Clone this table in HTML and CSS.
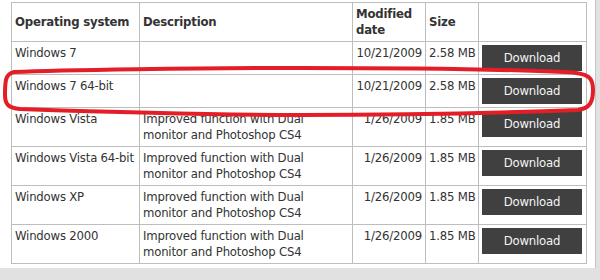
FILE: index.html
```html
<!DOCTYPE html>
<html lang="en">
<head>
  <meta charset="UTF-8">
  <title>Driver downloads</title>
  <link rel="stylesheet" href="styles.css">
</head>
<body>
  <div class="page">
    <table class="downloads">
      <colgroup>
        <col class="col-os">
        <col class="col-desc">
        <col class="col-date">
        <col class="col-size">
        <col class="col-action">
      </colgroup>
      <thead>
        <tr>
          <th>Operating system</th>
          <th>Description</th>
          <th>Modified date</th>
          <th>Size</th>
          <th></th>
        </tr>
      </thead>
      <tbody>
        <tr>
          <td class="os">Windows 7</td>
          <td></td>
          <td class="date">10/21/2009</td>
          <td class="size">2.58 MB</td>
          <td class="action"><a class="download-btn" href="#">Download</a></td>
        </tr>
        <tr>
          <td class="os">Windows 7 64-bit</td>
          <td></td>
          <td class="date">10/21/2009</td>
          <td class="size">2.58 MB</td>
          <td class="action"><a class="download-btn" href="#">Download</a></td>
        </tr>
        <tr>
          <td class="os">Windows Vista</td>
          <td>Improved function with Dual monitor and Photoshop CS4</td>
          <td class="date">1/26/2009</td>
          <td class="size">1.85 MB</td>
          <td class="action"><a class="download-btn" href="#">Download</a></td>
        </tr>
        <tr>
          <td class="os">Windows Vista 64-bit</td>
          <td>Improved function with Dual monitor and Photoshop CS4</td>
          <td class="date">1/26/2009</td>
          <td class="size">1.85 MB</td>
          <td class="action"><a class="download-btn" href="#">Download</a></td>
        </tr>
        <tr>
          <td class="os">Windows XP</td>
          <td>Improved function with Dual monitor and Photoshop CS4</td>
          <td class="date">1/26/2009</td>
          <td class="size">1.85 MB</td>
          <td class="action"><a class="download-btn" href="#">Download</a></td>
        </tr>
        <tr>
          <td class="os">Windows 2000</td>
          <td>Improved function with Dual monitor and Photoshop CS4</td>
          <td class="date">1/26/2009</td>
          <td class="size">1.85 MB</td>
          <td class="action"><a class="download-btn" href="#">Download</a></td>
        </tr>
      </tbody>
    </table>

    <!-- hand-drawn marker around the 64-bit row -->
    <svg class="marker" width="600" height="280" viewBox="0 0 600 280">
      <path d="M 14 72 C 60 70, 200 68, 300 68 C 420 68, 520 70, 565 72 C 590 73, 593 78, 593 90 C 593 102, 590 108, 578 110 C 500 113, 400 115, 300 115 C 200 115, 80 111, 20 109 C 8 108, 5 104, 5 95 C 5 82, 5 74, 14 72 Z"
            fill="none" stroke="#e31e26" stroke-width="4" stroke-linejoin="round"/>
    </svg>
  </div>
</body>
</html>
```

FILE: styles.css
```css
* { box-sizing: border-box; }
body {
  margin: 0;
  background-color: #e1e1e1;
  font-family: "DejaVu Sans Condensed", "DejaVu Sans", Tahoma, sans-serif;
  font-size: 13px;
  letter-spacing: -0.2px;
  color: #333;
}
.page {
  position: relative;
  width: 596px;
  height: 268px;
  padding: 2px 0 0 11px;
  background-color: #fff;
  border-right: 1px solid #c4c4c4;
}
.downloads {
  border-collapse: collapse;
  table-layout: fixed;
  width: 576px;
  line-height: 16px;
}
.col-os { width: 128px; }
.col-desc { width: 213px; }
.col-date { width: 73px; }
.col-size { width: 53px; }
.col-action { width: 108px; }
.downloads th,
.downloads td {
  border: 1px solid #bdbdbd;
  padding: 3px;
  text-align: left;
  vertical-align: top;
}
.downloads th {
  font-weight: bold;
  vertical-align: middle;
}
.downloads .os { white-space: nowrap; }
.downloads .date { text-align: right; white-space: nowrap; }
.downloads .size { white-space: nowrap; }
.download-btn {
  display: block;
  width: 100px;
  height: 26px;
  line-height: 26px;
  background-color: #404040;
  color: #f4f4f4;
  text-align: center;
  text-decoration: none;
}
.marker {
  position: absolute;
  top: 0;
  left: 0;
  pointer-events: none;
}
```
